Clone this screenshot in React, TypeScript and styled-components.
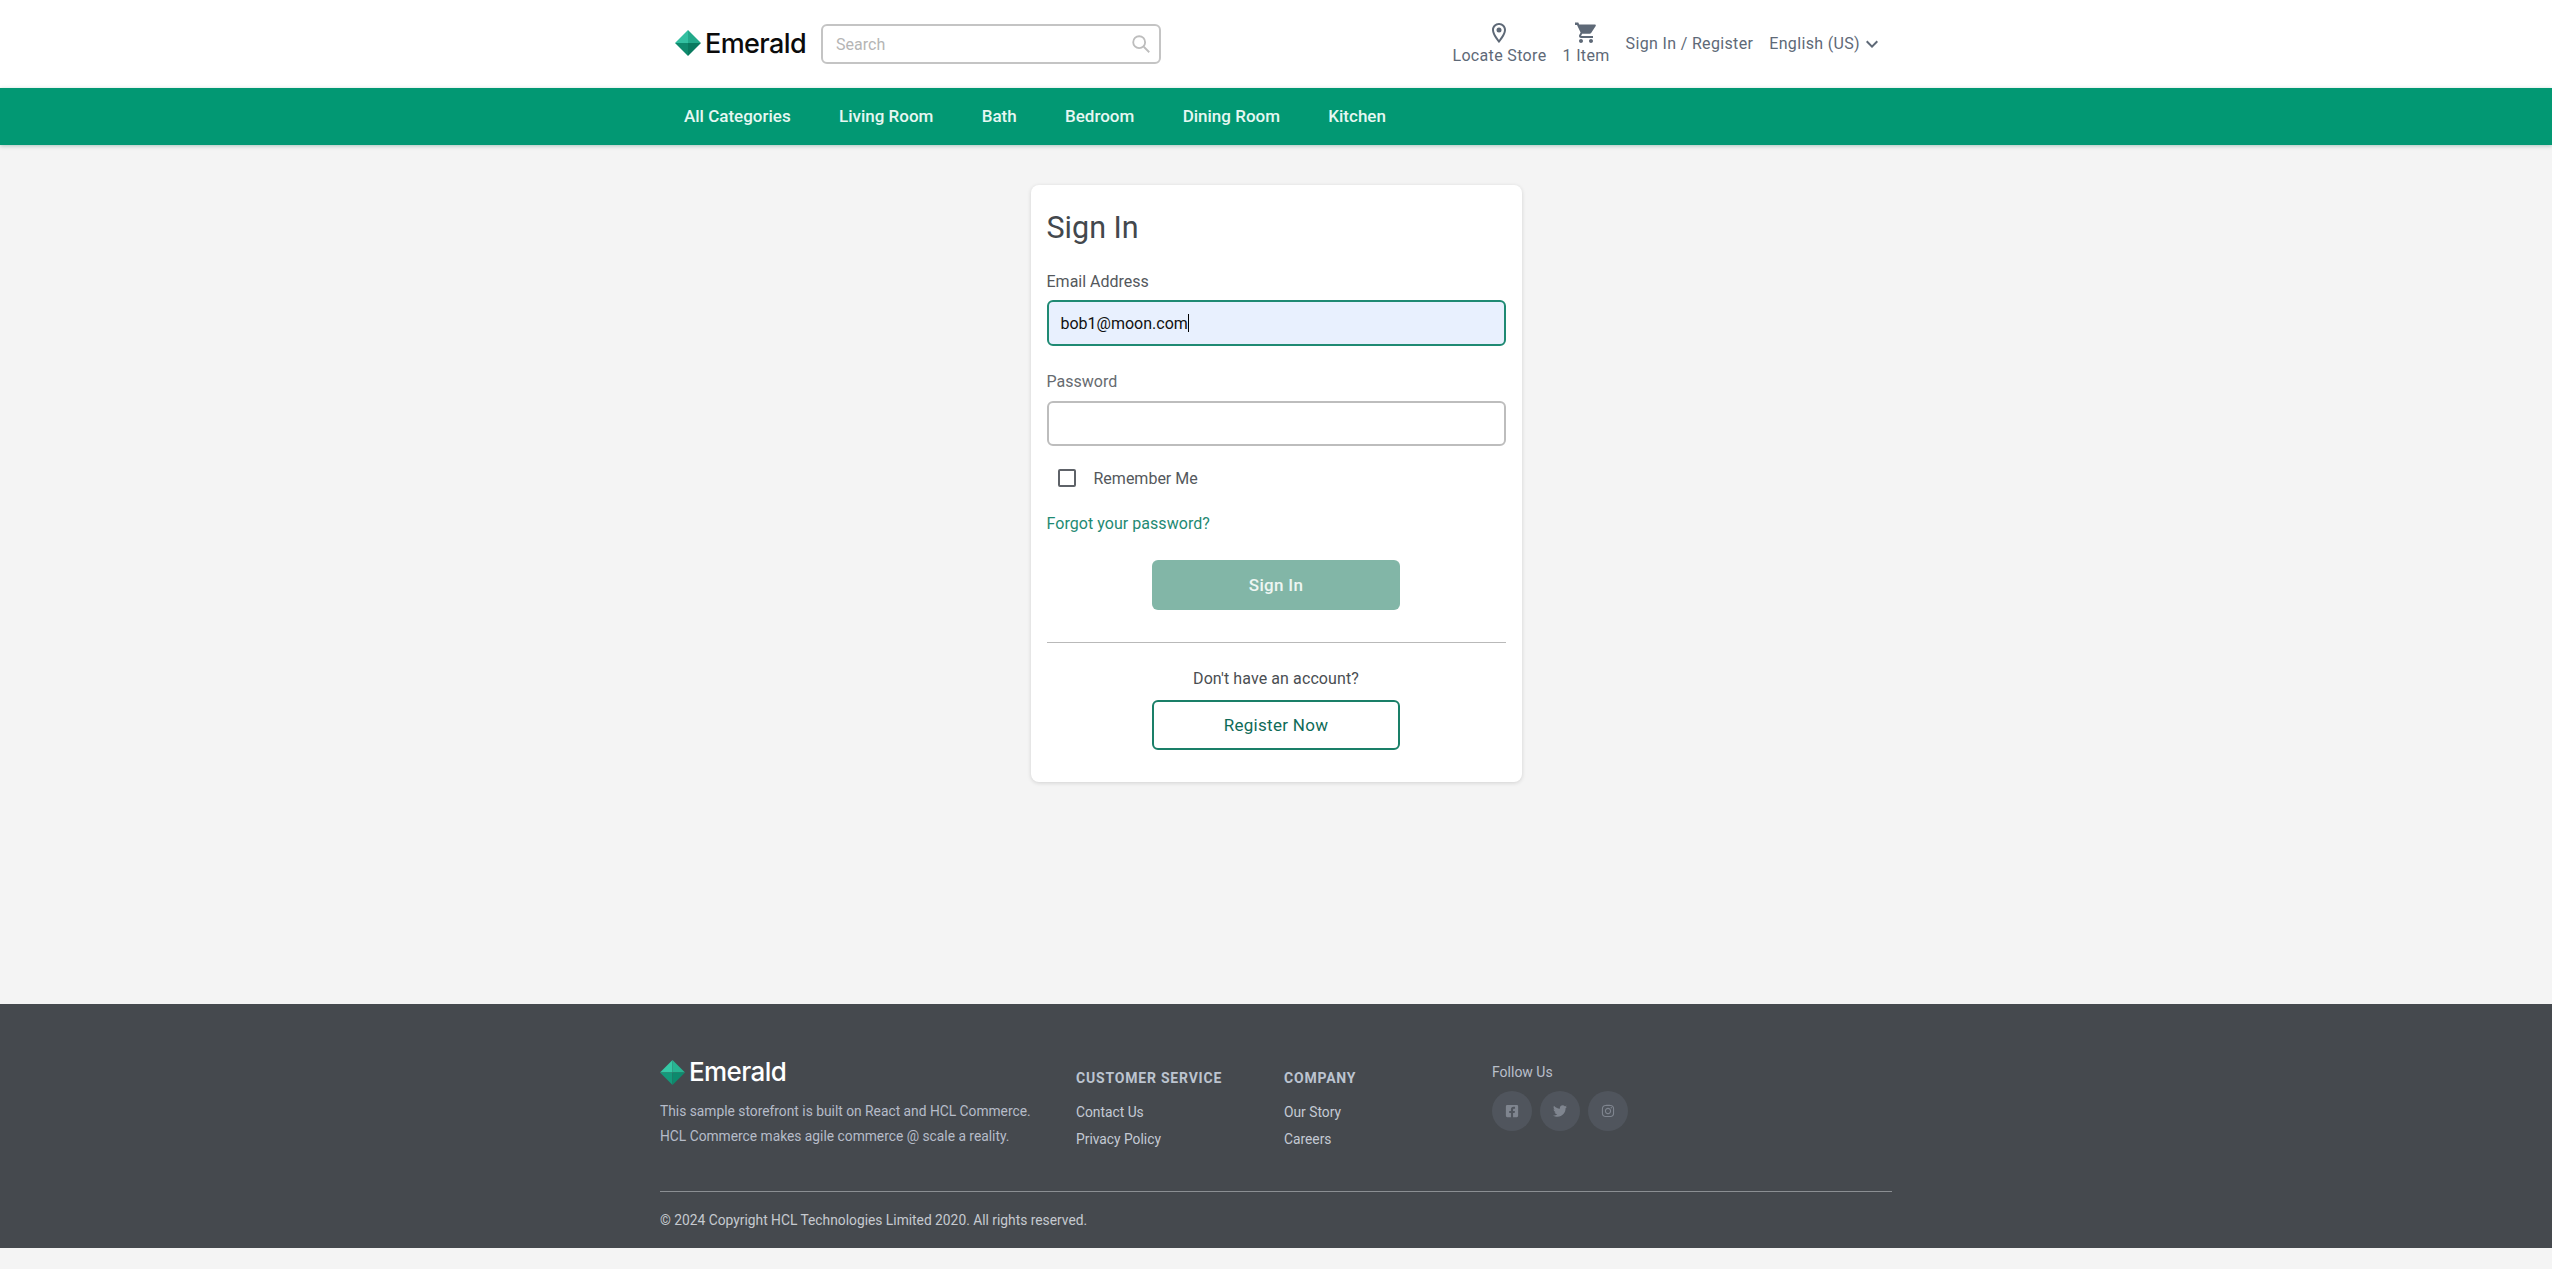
import React from 'react';
import styled, { createGlobalStyle } from 'styled-components';
import { FaFacebookSquare, FaTwitter, FaInstagram } from 'react-icons/fa';

const GlobalStyle = createGlobalStyle`
  html, body {
    margin: 0;
    padding: 0;
    background: #f4f4f4;
    font-family: Roboto, "Liberation Sans", sans-serif;
    font-size: 16px;
  }
  * { box-sizing: border-box; }
`;

const Page = styled.div`
  display: flex;
  flex-direction: column;
  padding-bottom: 21px;
`;

const Container = styled.div`
  width: 1232px;
  margin: 0 auto;
`;

const Header = styled.header`
  background: #fff;
`;

const HeaderRow = styled(Container)`
  height: 88px;
  display: flex;
  align-items: center;
  justify-content: space-between;
  padding: 0 8px 0 15px;
`;

const HeaderLeft = styled.div`
  display: flex;
  align-items: center;
`;

const HeaderRight = styled.div`
  display: flex;
  align-items: center;
  gap: 16px;
  color: #5e6977;
`;

const LogoMark = styled.span`
  display: flex;
  align-items: center;
  gap: 4px;
`;

const HeaderLogo = styled(LogoMark)`
  margin-bottom: 2px;
`;

const LogoText = styled.span<{ $size: number; $color: string }>`
  font-family: Inter, Lato, sans-serif;
  font-weight: 500;
  font-size: ${p => p.$size}px;
  letter-spacing: -0.6px;
  color: ${p => p.$color};
  line-height: 1;
`;

const SearchBox = styled.div`
  position: relative;
  margin-left: 15px;
  width: 340px;
  height: 40px;
  & > svg {
    position: absolute;
    right: 9px;
    top: 9px;
  }
`;

const SearchInput = styled.input`
  width: 100%;
  height: 100%;
  border: 2px solid #c4c4c4;
  border-radius: 6px;
  padding: 0 40px 0 13px;
  font: 400 16px Roboto, sans-serif;
  outline: none;
  &::placeholder {
    color: #b5b5b5;
    opacity: 1;
  }
`;

const IconLink = styled.div`
  display: flex;
  flex-direction: column;
  align-items: center;
  line-height: 22px;
  letter-spacing: 0.34px;
  & > svg {
    display: block;
  }
`;

const TextLink = styled.div`
  display: flex;
  align-items: center;
  letter-spacing: 0.34px;
  line-height: 24px;
`;

const NavBar = styled.nav`
  background: #029873;
  box-shadow: 0 1px 4px rgba(0, 90, 70, 0.3);
`;

const NavRow = styled(Container)`
  height: 57px;
  display: flex;
  align-items: center;
  gap: 48.3px;
  padding: 0 0 1px 24px;
`;

const NavItem = styled.a`
  color: #e6f7f2;
  font-weight: 500;
  font-size: 17px;
`;

const Main = styled.main`
  min-height: 859px;
  padding-top: 40px;
  display: flex;
  justify-content: center;
  align-items: flex-start;
`;

const Card = styled.div`
  width: 491px;
  background: #fff;
  border-radius: 8px;
  box-shadow: 0 1px 4px rgba(0, 0, 0, 0.14);
  padding: 16px 16px 32px;
  display: flex;
  flex-direction: column;
`;

const Title = styled.h1`
  margin: 0 0 17px;
  font-size: 30.5px;
  font-weight: 400;
  line-height: 53px;
  height: 52px;
  color: #43484d;
`;

const Label = styled.label<{ $muted?: boolean }>`
  display: block;
  font-size: 16px;
  line-height: 23px;
  color: ${p => (p.$muted ? '#666b70' : '#54585c')};
  margin-bottom: ${p => (p.$muted ? '8px' : '7px')};
`;

const EmailField = styled.div`
  height: 46px;
  border: 2px solid #1f8a73;
  border-radius: 6px;
  background: #e8f0fe;
  padding: 0 12px;
  display: flex;
  align-items: center;
  font-size: 16px;
  color: #111;
  margin-bottom: 24px;
`;

const Caret = styled.span`
  width: 1px;
  height: 18px;
  background: #000;
`;

const PasswordInput = styled.input`
  height: 45px;
  border: 2px solid #bdbdbd;
  border-radius: 6px;
  padding: 0 12px;
  outline: none;
  background: #fff;
`;

const RememberRow = styled.label`
  display: flex;
  align-items: center;
  gap: 18px;
  padding-left: 11px;
  margin-top: 20px;
  height: 24px;
  color: #54585c;
  font-size: 16px;
`;

const CheckBox = styled.input`
  appearance: none;
  margin: 0;
  width: 18px;
  height: 18px;
  border: 2px solid #5e6268;
  border-radius: 2px;
`;

const ForgotLink = styled.a`
  margin-top: 22px;
  line-height: 24px;
  color: #1f8a73;
  font-size: 16px;
  letter-spacing: 0.05px;
`;

const Button = styled.button<{ $outline?: boolean }>`
  align-self: center;
  width: 248px;
  height: 50px;
  border-radius: 6px;
  font: 500 17px Roboto, sans-serif;
  border: ${p => (p.$outline ? '2px solid #1a7f68' : 'none')};
  background: ${p => (p.$outline ? '#fff' : '#82b6a7')};
  color: ${p => (p.$outline ? '#0f6b58' : '#eef6f3')};
  font-weight: ${p => (p.$outline ? 400 : 500)};
  letter-spacing: 0.3px;
`;

const SignInButton = styled(Button)`
  margin-top: 24px;
`;

const Divider = styled.hr`
  width: 100%;
  border: 0;
  border-top: 1px solid #b9b9b9;
  margin: 32px 0 24px;
`;

const Prompt = styled.p`
  margin: 0 0 9px;
  text-align: center;
  line-height: 24px;
  color: #4a4e52;
  font-size: 16px;
  letter-spacing: 0.1px;
`;

const Footer = styled.footer`
  background: #45494e;
  height: 244px;
`;

const FooterInner = styled(Container)`
  height: 100%;
  display: flex;
  flex-direction: column;
`;

const FooterTop = styled.div`
  height: 188px;
  border-bottom: 1px solid #8b8f93;
  display: grid;
  grid-template-columns: 416px 208px 208px 1fr;
  padding-top: 55px;
`;

const Blurb = styled.p`
  margin: 14px 0 0;
  font-size: 13.8px;
  line-height: 25px;
  color: #b6bcc9;
`;

const ColumnTitle = styled.h4`
  margin: 10px 0 12px;
  font-size: 14px;
  line-height: 18px;
  font-weight: 700;
  letter-spacing: 0.8px;
  color: #bcc4d0;
  text-transform: uppercase;
`;

const ColumnLink = styled.a`
  display: block;
  font-size: 13.8px;
  line-height: 27px;
  color: #c4cad4;
`;

const FollowTitle = styled.div`
  margin-top: 4px;
  font-size: 14px;
  line-height: 18px;
  color: #b9bfca;
  margin-bottom: 10px;
`;

const SocialRow = styled.div`
  display: flex;
  gap: 8px;
`;

const SocialCircle = styled.span`
  width: 40px;
  height: 40px;
  border-radius: 50%;
  background: #50555d;
  color: #7f858f;
  display: flex;
  align-items: center;
  justify-content: center;
  font-size: 14px;
`;

const Copyright = styled.div`
  padding-top: 18px;
  font-size: 13.8px;
  line-height: 20px;
  color: #c6cad0;
`;

const Diamond: React.FC<{ colors: [string, string, string, string]; size: number }> = ({ colors, size }) => (
  <svg width={size} height={size} viewBox="0 0 26 26">
    <path d="M13 0 L0 13 L13 13 Z" fill={colors[0]} />
    <path d="M13 0 L26 13 L13 13 Z" fill={colors[1]} />
    <path d="M0 13 L13 26 L13 13 Z" fill={colors[2]} />
    <path d="M26 13 L13 26 L13 13 Z" fill={colors[3]} />
  </svg>
);

const nav = ['All Categories', 'Living Room', 'Bath', 'Bedroom', 'Dining Room', 'Kitchen'];

const App: React.FC = () => (
  <Page>
    <GlobalStyle />
    <Header>
      <HeaderRow>
        <HeaderLeft>
          <HeaderLogo>
            <Diamond size={26} colors={['#33c0a1', '#22a98a', '#0f8a6d', '#097a5f']} />
            <LogoText $size={27} $color="#0b0b0b">Emerald</LogoText>
          </HeaderLogo>
          <SearchBox>
            <SearchInput placeholder="Search" />
            <svg width="22" height="22" viewBox="0 0 24 24" fill="none" stroke="#bdbdbd" strokeWidth="2">
              <circle cx="10" cy="10" r="6.5" />
              <path d="M15 15l6 6" />
            </svg>
          </SearchBox>
        </HeaderLeft>
        <HeaderRight>
          <IconLink>
            <svg width="24" height="24" viewBox="0 0 24 24" fill="#5e6977">
              <path d="M12 2C8.13 2 5 5.13 5 9c0 5.25 7 13 7 13s7-7.75 7-13c0-3.87-3.13-7-7-7zM7 9c0-2.76 2.24-5 5-5s5 2.24 5 5c0 2.88-2.88 7.19-5 9.88C9.92 16.21 7 11.85 7 9z" />
              <circle cx="12" cy="9" r="2.5" />
            </svg>
            Locate Store
          </IconLink>
          <IconLink>
            <svg width="24" height="24" viewBox="0 0 24 24" fill="#5e6977">
              <path d="M7 18c-1.1 0-1.99.9-1.99 2S5.9 22 7 22s2-.9 2-2-.9-2-2-2zM1 2v2h2l3.6 7.59-1.35 2.45c-.16.28-.25.61-.25.96 0 1.1.9 2 2 2h12v-2H7.42c-.14 0-.25-.11-.25-.25l.03-.12.9-1.83h7.45c.75 0 1.41-.41 1.75-1.03L21.7 4.96c.08-.14.12-.31.12-.48 0-.55-.45-1-1-1H5.21l-.94-2H1zm16 16c-1.1 0-1.99.9-1.99 2s.89 2 1.99 2 2-.9 2-2-.9-2-2-2z" />
            </svg>
            1 Item
          </IconLink>
          <TextLink>Sign In / Register</TextLink>
          <TextLink>
            English (US)
            <svg width="24" height="24" viewBox="0 0 24 24" fill="#5e6977">
              <path d="M16.59 8.59L12 13.17 7.41 8.59 6 10l6 6 6-6z" />
            </svg>
          </TextLink>
        </HeaderRight>
      </HeaderRow>
    </Header>
    <NavBar>
      <NavRow>
        {nav.map(item => <NavItem key={item}>{item}</NavItem>)}
      </NavRow>
    </NavBar>
    <Main>
      <Card>
        <Title>Sign In</Title>
        <Label>Email Address</Label>
        <EmailField>bob1@moon.com<Caret /></EmailField>
        <Label $muted>Password</Label>
        <PasswordInput type="password" />
        <RememberRow>
          <CheckBox type="checkbox" />
          Remember Me
        </RememberRow>
        <ForgotLink>Forgot your password?</ForgotLink>
        <SignInButton>Sign In</SignInButton>
        <Divider />
        <Prompt>Don't have an account?</Prompt>
        <Button $outline>Register Now</Button>
      </Card>
    </Main>
    <Footer>
      <FooterInner>
        <FooterTop>
          <div>
            <LogoMark>
              <Diamond size={25} colors={['#35c9a6', '#27b592', '#149a7b', '#0d8a6d']} />
              <LogoText $size={26} $color="#ffffff">Emerald</LogoText>
            </LogoMark>
            <Blurb>
              This sample storefront is built on React and HCL Commerce.<br />
              HCL Commerce makes agile commerce @ scale a reality.
            </Blurb>
          </div>
          <div>
            <ColumnTitle>Customer Service</ColumnTitle>
            <ColumnLink>Contact Us</ColumnLink>
            <ColumnLink>Privacy Policy</ColumnLink>
          </div>
          <div>
            <ColumnTitle>Company</ColumnTitle>
            <ColumnLink>Our Story</ColumnLink>
            <ColumnLink>Careers</ColumnLink>
          </div>
          <div>
            <FollowTitle>Follow Us</FollowTitle>
            <SocialRow>
              <SocialCircle><FaFacebookSquare /></SocialCircle>
              <SocialCircle><FaTwitter /></SocialCircle>
              <SocialCircle><FaInstagram /></SocialCircle>
            </SocialRow>
          </div>
        </FooterTop>
        <Copyright>© 2024 Copyright HCL Technologies Limited 2020. All rights reserved.</Copyright>
      </FooterInner>
    </Footer>
  </Page>
);

export default App;
